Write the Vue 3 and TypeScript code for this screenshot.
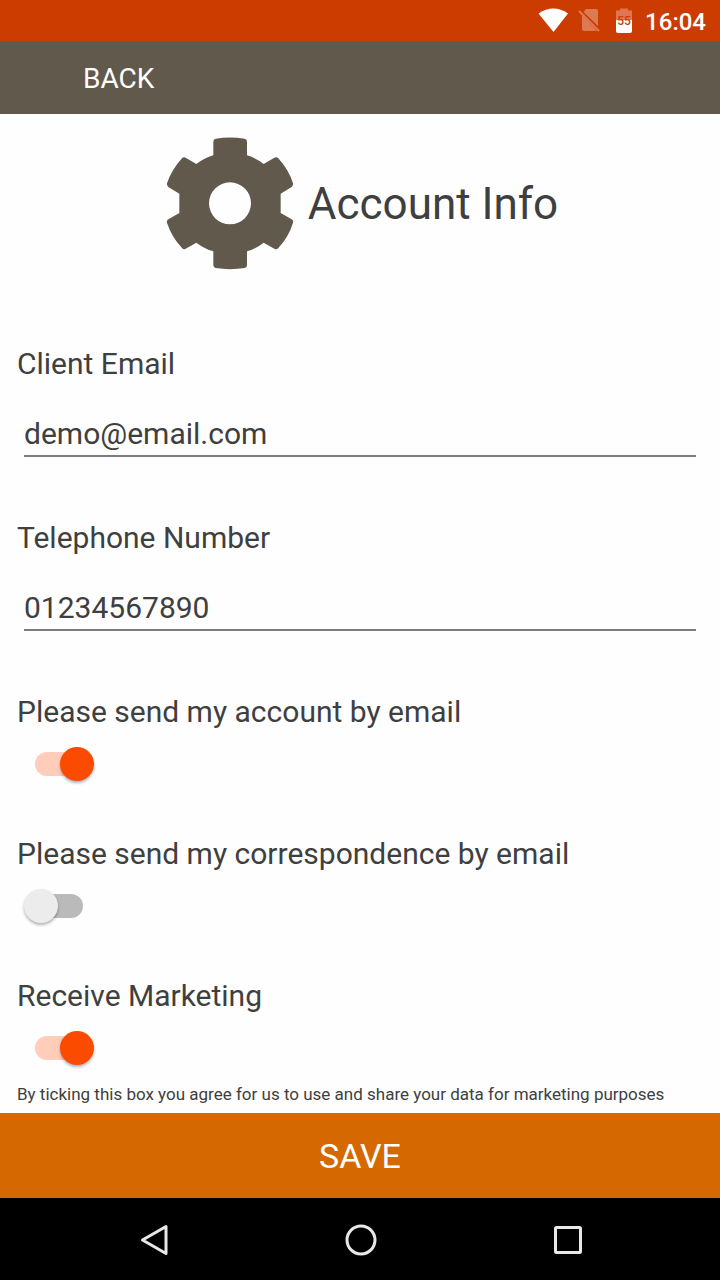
<script setup lang="ts">
import { ref } from 'vue'

const email = ref('demo@email.com')
const telephone = ref('01234567890')
const accountByEmail = ref(true)
const correspondenceByEmail = ref(false)
const marketing = ref(true)
</script>

<template>
  <div class="screen">
    <div class="status">
      <svg class="status-icons" viewBox="0 0 96 26" aria-hidden="true">
        <path d="M0.500 5.500Q15.500-4.500 30 5.500L15.500 24Z" fill="#fff" />
        <g fill="#fff" fill-opacity=".32">
          <path d="M48 1H58Q60 1 60 3V18L45.500 4Z" />
          <path d="M44 7L59 23H46Q44 23 44 21Z" />
        </g>
        <path d="M41 3L61 23" stroke="#de7b54" stroke-width="2" />
        <path d="M78 2.500H82V.5H90V2.500H94V12H78Z" fill="#e07650" />
        <path d="M78 12H94V23Q94 25 92 25H80Q78 25 78 23Z" fill="#fff" />
        <text x="86" y="17" text-anchor="middle" class="battery-level">55</text>
      </svg>
      <time>16:04</time>
    </div>

    <header class="toolbar">
      <button type="button" class="back">BACK</button>
    </header>

    <form class="content" @submit.prevent>
      <div class="heading">
        <svg class="gear" viewBox="48 50 384 399" aria-hidden="true">
          <path
            fill="#61594c"
            fill-rule="evenodd"
            d="M190 64Q190 57 197 55Q240 48 284 55Q291 57 291 64V105Q318 113 341 131L373 112Q380 108 385 114Q416 148 429 189Q430 194 425 200L392 220V278L425 297Q431 301 429 307Q416 350 385 383Q380 389 373 385L341 367Q318 385 291 393V434Q291 441 284 443Q240 450 197 443Q190 441 190 434V393Q163 385 139 367L107 385Q101 389 96 383Q65 350 51 307Q49 301 55 297L88 278V220L55 200Q50 194 51 189Q65 148 96 114Q101 108 107 112L139 131Q163 113 190 105ZM240 186A63 63 0 1 0 240 312A63 63 0 1 0 240 186Z"
          />
        </svg>
        <h1>Account Info</h1>
      </div>

      <div class="field">
        <label for="email">Client Email</label>
        <input id="email" v-model="email" class="text" type="email" />
      </div>
      <div class="field">
        <label for="telephone">Telephone Number</label>
        <input id="telephone" v-model="telephone" class="text" type="tel" />
      </div>

      <div class="option">
        <label for="account">Please send my account by email</label>
        <input id="account" v-model="accountByEmail" class="switch" type="checkbox" />
      </div>
      <div class="option">
        <label for="correspondence">Please send my correspondence by email</label>
        <input id="correspondence" v-model="correspondenceByEmail" class="switch" type="checkbox" />
      </div>
      <div class="option">
        <label for="marketing">Receive Marketing</label>
        <input id="marketing" v-model="marketing" class="switch" type="checkbox" aria-describedby="terms" />
      </div>
      <p id="terms" class="note">By ticking this box you agree for us to use and share your data for marketing purposes</p>

      <button type="submit" class="save">SAVE</button>
    </form>

    <nav class="system">
      <button type="button" aria-label="Back">
        <svg viewBox="0 0 36 36"><path d="M30 4.500V31.500L6.500 18Z" /></svg>
      </button>
      <button type="button" aria-label="Home">
        <svg viewBox="0 0 36 36"><circle cx="18" cy="18" r="14" /></svg>
      </button>
      <button type="button" aria-label="Recent apps">
        <svg viewBox="0 0 36 36"><rect x="5.500" y="5.500" width="25" height="25" rx="1" /></svg>
      </button>
    </nav>
  </div>
</template>

<style>
body {
  margin: 0;
  background: #fff;
}
</style>

<style scoped>
.screen {
  display: flex;
  flex-direction: column;
  min-height: 100vh;
  background: #fefefe;
  color: #3e4040;
  font-family: Roboto, sans-serif;
}

button {
  padding: 0;
  border: 0;
  background: none;
  color: #fff;
  font-family: inherit;
}

.status {
  display: flex;
  align-items: center;
  justify-content: flex-end;
  gap: 11px;
  height: 41px;
  padding-right: 14px;
  background: #cc3b00;
  color: #fff;
}

.status-icons {
  width: 96px;
  height: 26px;
}

.battery-level {
  fill: #cc3b00;
  font-size: 12px;
  font-weight: 500;
}

time {
  padding-top: 2px;
  font-size: 24px;
  font-weight: 500;
  line-height: 28px;
}

.toolbar {
  display: flex;
  height: 73px;
  padding-left: 83px;
  background: #61594c;
}

.back {
  padding-top: 2px;
  font-size: 28px;
}

.content {
  display: flex;
  flex: 1;
  flex-direction: column;
}

.heading {
  display: flex;
  align-items: center;
  justify-content: center;
  gap: 14px;
  padding: 23px 0 74px 4px;
}

.gear {
  width: 128px;
  height: 133px;
}

h1 {
  margin: 0;
  font-size: 44px;
  font-weight: 400;
  line-height: 52px;
}

.field,
.option {
  display: flex;
  flex-direction: column;
  align-items: flex-start;
  padding: 0 24px 0 17px;
}

label {
  font-size: 30px;
  line-height: 40px;
}

.field {
  gap: 24px;
  padding-bottom: 61px;
}

.text {
  box-sizing: border-box;
  align-self: stretch;
  height: 49px;
  margin-left: 7px;
  padding: 4px 0 0;
  border: 0;
  border-bottom: 2px solid #7c7c7c;
  border-radius: 0;
  outline: 0;
  background: none;
  color: inherit;
  font-family: inherit;
  font-size: 30px;
}

.option {
  gap: 15px;
  padding-bottom: 53px;
}

.option:last-of-type {
  padding-bottom: 19px;
}

.switch {
  display: grid;
  align-items: center;
  width: 70px;
  height: 34px;
  margin: 0 0 0 7px;
  appearance: none;
}

.switch::before,
.switch::after {
  grid-area: 1 / 1;
  content: '';
}

.switch::before {
  justify-self: center;
  width: 48px;
  height: 24px;
  border-radius: 12px;
  background: #bababa;
}

.switch::after {
  width: 34px;
  height: 34px;
  border-radius: 50%;
  background: #ececec;
  box-shadow: 0 2px 3px rgb(0 0 0 / 30%);
}

.switch:checked::before {
  background: #ffcdba;
}

.switch:checked::after {
  justify-self: end;
  background: #fa4b00;
}

.note {
  height: 19px;
  margin: 0 0 auto;
  padding: 0 17px;
  overflow: hidden;
  font-size: 17px;
  line-height: 20px;
}

.save {
  height: 85px;
  margin-top: 10px;
  background: #d56900;
  font-size: 34px;
}

.system {
  display: flex;
  box-sizing: border-box;
  align-items: center;
  justify-content: center;
  gap: 171px;
  height: 82px;
  padding: 2px 0 0 2px;
  background: #000;
}

.system button,
.system svg {
  display: block;
  width: 36px;
  height: 36px;
}

.system svg {
  fill: none;
  stroke: #e8e8e8;
  stroke-linejoin: round;
  stroke-width: 3;
}
</style>
